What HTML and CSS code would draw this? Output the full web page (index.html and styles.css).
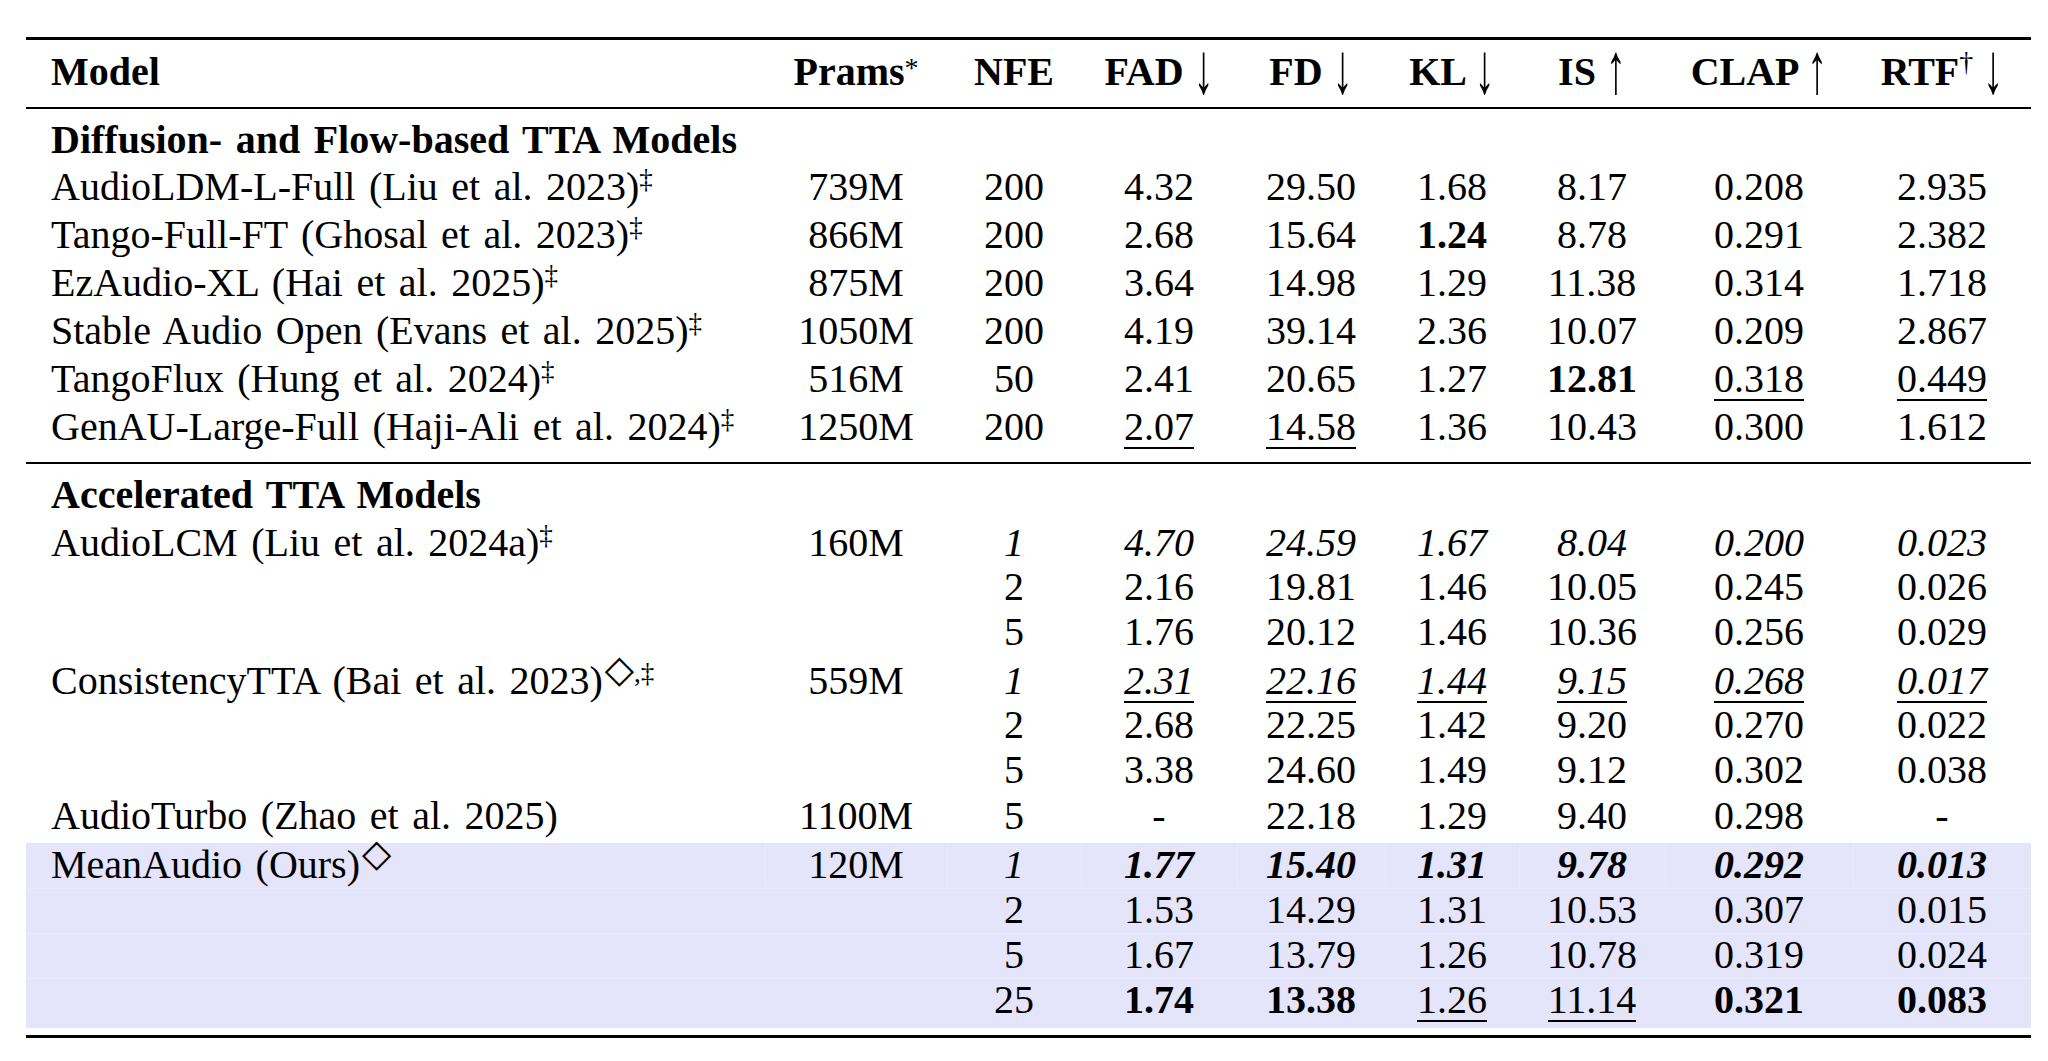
FILE: index.html
```html
<!DOCTYPE html>
<html lang="en">
<head>
<meta charset="utf-8">
<title>TTA model comparison</title>
<link rel="stylesheet" href="styles.css">
</head>
<body>
<div class="page">
  <div class="tbl">
    <div class="row head">
      <div class="m">Model</div>
      <div>Prams<span class="ast">*</span></div>
      <div>NFE</div>
      <div>FAD <span class="ar">↓</span></div>
      <div>FD <span class="ar">↓</span></div>
      <div>KL <span class="ar">↓</span></div>
      <div>IS <span class="ar">↑</span></div>
      <div>CLAP <span class="ar">↑</span></div>
      <div>RTF<span class="dg-h">†</span> <span class="ar">↓</span></div>
    </div>

    <div class="grp g1">
      <div class="row sec"><div class="m b span">Diffusion- and Flow-based TTA Models</div></div>
      <div class="row h47">
        <div class="m">AudioLDM-L-Full (Liu et al. 2023)<span class="dg">‡</span></div>
        <div>739M</div><div>200</div><div>4.32</div><div>29.50</div><div>1.68</div><div>8.17</div><div>0.208</div><div>2.935</div>
      </div>
      <div class="row h48">
        <div class="m">Tango-Full-FT (Ghosal et al. 2023)<span class="dg">‡</span></div>
        <div>866M</div><div>200</div><div>2.68</div><div>15.64</div><div class="b">1.24</div><div>8.78</div><div>0.291</div><div>2.382</div>
      </div>
      <div class="row h48">
        <div class="m">EzAudio-XL (Hai et al. 2025)<span class="dg">‡</span></div>
        <div>875M</div><div>200</div><div>3.64</div><div>14.98</div><div>1.29</div><div>11.38</div><div>0.314</div><div>1.718</div>
      </div>
      <div class="row h48">
        <div class="m">Stable Audio Open (Evans et al. 2025)<span class="dg">‡</span></div>
        <div>1050M</div><div>200</div><div>4.19</div><div>39.14</div><div>2.36</div><div>10.07</div><div>0.209</div><div>2.867</div>
      </div>
      <div class="row h48">
        <div class="m">TangoFlux (Hung et al. 2024)<span class="dg">‡</span></div>
        <div>516M</div><div>50</div><div>2.41</div><div>20.65</div><div>1.27</div><div class="b">12.81</div><div><span class="u">0.318</span></div><div><span class="u">0.449</span></div>
      </div>
      <div class="row h48">
        <div class="m">GenAU-Large-Full (Haji-Ali et al. 2024)<span class="dg">‡</span></div>
        <div>1250M</div><div>200</div><div><span class="u">2.07</span></div><div><span class="u">14.58</span></div><div>1.36</div><div>10.43</div><div>0.300</div><div>1.612</div>
      </div>
    </div>

    <div class="grp g2">
      <div class="row sec"><div class="m b span">Accelerated TTA Models</div></div>
      <div class="row h48">
        <div class="m">AudioLCM (Liu et al. 2024a)<span class="dg">‡</span></div>
        <div>160M</div><div class="i">1</div><div class="i">4.70</div><div class="i">24.59</div><div class="i">1.67</div><div class="i">8.04</div><div class="i">0.200</div><div class="i">0.023</div>
      </div>
      <div class="row h44">
        <div class="m"></div>
        <div></div><div>2</div><div>2.16</div><div>19.81</div><div>1.46</div><div>10.05</div><div>0.245</div><div>0.026</div>
      </div>
      <div class="row h45">
        <div class="m"></div>
        <div></div><div>5</div><div>1.76</div><div>20.12</div><div>1.46</div><div>10.36</div><div>0.256</div><div>0.029</div>
      </div>
      <div class="row h49">
        <div class="m">ConsistencyTTA (Bai et al. 2023)<span class="dm">◇</span><span class="dg">,‡</span></div>
        <div>559M</div><div class="i">1</div><div class="i"><span class="u">2.31</span></div><div class="i"><span class="u">22.16</span></div><div class="i"><span class="u">1.44</span></div><div class="i"><span class="u">9.15</span></div><div class="i"><span class="u">0.268</span></div><div class="i"><span class="u">0.017</span></div>
      </div>
      <div class="row h44">
        <div class="m"></div>
        <div></div><div>2</div><div>2.68</div><div>22.25</div><div>1.42</div><div>9.20</div><div>0.270</div><div>0.022</div>
      </div>
      <div class="row h45">
        <div class="m"></div>
        <div></div><div>5</div><div>3.38</div><div>24.60</div><div>1.49</div><div>9.12</div><div>0.302</div><div>0.038</div>
      </div>
      <div class="row h46">
        <div class="m">AudioTurbo (Zhao et al. 2025)</div>
        <div>1100M</div><div>5</div><div>-</div><div>22.18</div><div>1.29</div><div>9.40</div><div>0.298</div><div>-</div>
      </div>
    </div>

    <div class="hl">
      <div class="row h435">
        <div class="m">MeanAudio (Ours)<span class="dm">◇</span></div>
        <div>120M</div><div class="i">1</div><div class="bi">1.77</div><div class="bi">15.40</div><div class="bi">1.31</div><div class="bi">9.78</div><div class="bi">0.292</div><div class="bi">0.013</div>
      </div>
      <div class="row h45">
        <div class="m"></div>
        <div></div><div>2</div><div>1.53</div><div>14.29</div><div>1.31</div><div>10.53</div><div>0.307</div><div>0.015</div>
      </div>
      <div class="row h45">
        <div class="m"></div>
        <div></div><div>5</div><div>1.67</div><div>13.79</div><div>1.26</div><div>10.78</div><div>0.319</div><div>0.024</div>
      </div>
      <div class="row h45">
        <div class="m"></div>
        <div></div><div>25</div><div class="b">1.74</div><div class="b">13.38</div><div><span class="u">1.26</span></div><div><span class="u">11.14</span></div><div class="b">0.321</div><div class="b">0.083</div>
      </div>
    </div>
  </div>
</div>
</body>
</html>
```

FILE: styles.css
```css
html, body {
  margin: 0;
  padding: 0;
  background: #ffffff;
}

body {
  font-family: "Liberation Serif", "Times New Roman", serif;
  color: #000000;
}

.page {
  padding: 37px 0 0 26px;
}

.tbl {
  width: 2005px;
  border-top: 3px solid #000000;
  border-bottom: 3px solid #000000;
  padding-bottom: 7px;
}

.row {
  display: grid;
  grid-template-columns: 739px 182px 134px 156px 148px 134px 146px 188px 178px;
  align-items: end;
  box-sizing: border-box;
  font-size: 40px;
  line-height: 44px;
}

.row > div {
  text-align: center;
  white-space: nowrap;
  height: 44px;
}

.row > .m {
  text-align: left;
  padding-left: 25px;
  word-spacing: 3.5px;
}

.row > .span {
  grid-column: 1 / -1;
}

.head {
  height: 69px;
  padding-bottom: 13px;
  border-bottom: 2px solid #000000;
  font-weight: bold;
}

.sec { height: 52.5px; }
.h435 { height: 43.5px; }
.h44 { height: 44px; }
.h45 { height: 45px; }
.h46 { height: 46px; }
.h47 { height: 47px; }
.h48 { height: 48px; }
.h49 { height: 49px; }

.g1 {
  padding-bottom: 13.5px;
  border-bottom: 2px solid #000000;
}

.hl {
  margin-top: 5.5px;
  padding-bottom: 6.5px;
  background: #e4e4fa;
}

.hl .row > div + div {
  box-shadow: inset 1px 0 0 #eaeafb;
}

.hl .row + .row > div {
  box-shadow: inset 0 1px 0 #eaeafb;
}

.b { font-weight: bold; }
.i { font-style: italic; }
.bi { font-weight: bold; font-style: italic; }

.u {
  display: inline-block;
  line-height: 40px;
  border-bottom: 2px solid #000000;
}

.ar {
  display: inline-block;
  font-weight: normal;
  transform: scaleY(1.8);
  transform-origin: 50% 25.5px;
}

.dg {
  font-weight: normal;
  font-style: normal;
  font-size: 27px;
  line-height: 0;
  vertical-align: 12px;
}

.dg-h {
  font-weight: normal;
  font-size: 28px;
  line-height: 0;
  vertical-align: 14px;
}

.ast {
  font-weight: normal;
  font-size: 28px;
  line-height: 0;
  vertical-align: 8px;
}

.dm {
  font-family: "DejaVu Sans", sans-serif;
  font-weight: normal;
  font-style: normal;
  font-size: 38px;
  line-height: 0;
  vertical-align: 12px;
  margin-left: 2px;
}
```
